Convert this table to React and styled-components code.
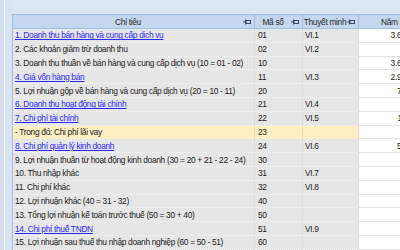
import React from 'react';
import styled, { createGlobalStyle } from 'styled-components';

const GlobalStyle = createGlobalStyle`
  html, body {
    margin: 0;
    padding: 0;
    overflow: hidden;
    background: #dce6f3;
  }
  body {
    font-family: "Liberation Sans", Arial, sans-serif;
  }
`;

const rows = [
  { name: '1. Doanh thu bán hàng và cung cấp dịch vụ', code: '01', note: 'VI.1', value: '3.612.458.300', link: true },
  { name: '2. Các khoản giảm trừ doanh thu', code: '02', note: 'VI.2', value: '' },
  { name: '3. Doanh thu thuần về bán hàng và cung cấp dịch vụ (10 = 01 - 02)', code: '10', note: '', value: '3.612.458.300' },
  { name: '4. Giá vốn hàng bán', code: '11', note: 'VI.3', value: '2.905.120.450', link: true },
  { name: '5. Lợi nhuận gộp về bán hàng và cung cấp dịch vụ (20 = 10 - 11)', code: '20', note: '', value: '707.337.850' },
  { name: '6. Doanh thu hoạt động tài chính', code: '21', note: 'VI.4', value: '', link: true },
  { name: '7. Chi phí tài chính', code: '22', note: 'VI.5', value: '112.500.000', link: true },
  { name: '- Trong đó: Chi phí lãi vay', code: '23', note: '', value: '', highlight: true },
  { name: '8. Chi phí quản lý kinh doanh', code: '24', note: 'VI.6', value: '514.820.000', link: true },
  { name: '9. Lợi nhuận thuần từ hoạt động kinh doanh (30 = 20 + 21 - 22 - 24)', code: '30', note: '', value: '' },
  { name: '10. Thu nhập khác', code: '31', note: 'VI.7', value: '' },
  { name: '11. Chi phí khác', code: '32', note: 'VI.8', value: '' },
  { name: '12. Lợi nhuận khác (40 = 31 - 32)', code: '40', note: '', value: '' },
  { name: '13. Tổng lợi nhuận kế toán trước thuế (50 = 30 + 40)', code: '50', note: '', value: '' },
  { name: '14. Chi phí thuế TNDN', code: '51', note: 'VI.9', value: '', link: true },
  { name: '15. Lợi nhuận sau thuế thu nhập doanh nghiệp (60 = 50 - 51)', code: '60', note: '', value: '' },
];

const Pin = () => (
  <svg width="8" height="6" viewBox="0 0 8 6">
    <path d="M0 3h2.5M2.5 0.5v5" stroke="#3b4a5e" strokeWidth="1" fill="none" />
    <rect x="3" y="1.5" width="4.5" height="3" stroke="#3b4a5e" strokeWidth="1" fill="none" />
  </svg>
);

const App = () => {
  return (
    <>
      <GlobalStyle />
      <Page>
        <Gutter />
        <Main>
          <Grid>
            <HeadCell>
              <span>Chỉ tiêu</span>
              <Pin />
            </HeadCell>
            <HeadCell>
              <span>Mã số</span>
              <Pin />
            </HeadCell>
            <HeadCell>
              <span>Thuyết minh</span>
              <Pin />
            </HeadCell>
            <HeadCell $indent={22}>
              <span>Năm nay</span>
            </HeadCell>
            {rows.map((r) => (
              <React.Fragment key={r.code}>
                <Cell $highlight={r.highlight}>
                  {r.link ? <Link>{r.name}</Link> : r.name}
                </Cell>
                <Cell $highlight={r.highlight} $pad={3}>{r.code}</Cell>
                <Cell $highlight={r.highlight}>{r.note}</Cell>
                <ValueCell>{r.value}</ValueCell>
              </React.Fragment>
            ))}
          </Grid>
        </Main>
      </Page>
    </>
  );
};

const Page = styled.div`
  display: flex;
  width: 400px;
  height: 250px;
  overflow: hidden;
  background: #dce6f3;
`;

const Gutter = styled.div`
  flex: 0 0 12px;
  box-sizing: border-box;
  border-left: 4px solid #d3deed;
  background: linear-gradient(to right, #f1f5fb 0 1px, #d9e4f2 1px);
`;

const Main = styled.div`
  flex: 1 0 auto;
  padding-top: 14px;
`;

const Grid = styled.div`
  display: grid;
  grid-template-columns: 242px 48px 56px 84px;
  grid-template-rows: 15px;
  grid-auto-rows: 13.8px;
  border-left: 1px solid #a9bcd6;
  font-size: 8.4px;
  letter-spacing: -0.32px;
  color: #222;
`;

const HeadCell = styled.div`
  display: flex;
  align-items: center;
  padding: 0 3px 0 ${(p) => p.$indent || 0}px;
  background: #c4d7ef;
  border-top: 1px solid #a6bfdf;
  border-bottom: 1px solid #a6bfdf;
  border-right: 1px solid #a6bfdf;
  color: #2a2a2a;
  white-space: nowrap;
  overflow: hidden;

  span {
    flex: 1;
    text-align: ${(p) => (p.$indent ? 'left' : 'center')};
  }
`;

const Cell = styled.div`
  display: flex;
  align-items: center;
  min-width: 0;
  padding-left: ${(p) => (p.$pad ? p.$pad : 2)}px;
  background: ${(p) => (p.$highlight ? '#fdefc4' : '#e6e6e6')};
  border-bottom: 1px dotted ${(p) => (p.$highlight ? '#fdefc4' : '#f3f3f3')};
  border-right: 1px solid ${(p) => (p.$highlight ? '#eadcae' : '#dedede')};
  white-space: nowrap;
  overflow: hidden;
`;

const ValueCell = styled.div`
  display: flex;
  align-items: center;
  justify-content: flex-end;
  padding-right: 3px;
  background: #fff;
  border-bottom: 1px solid #e2e2e2;
  white-space: nowrap;
  overflow: hidden;
`;

const Link = styled.span`
  color: #2a2aff;
  text-decoration: underline;
`;

export default App;
